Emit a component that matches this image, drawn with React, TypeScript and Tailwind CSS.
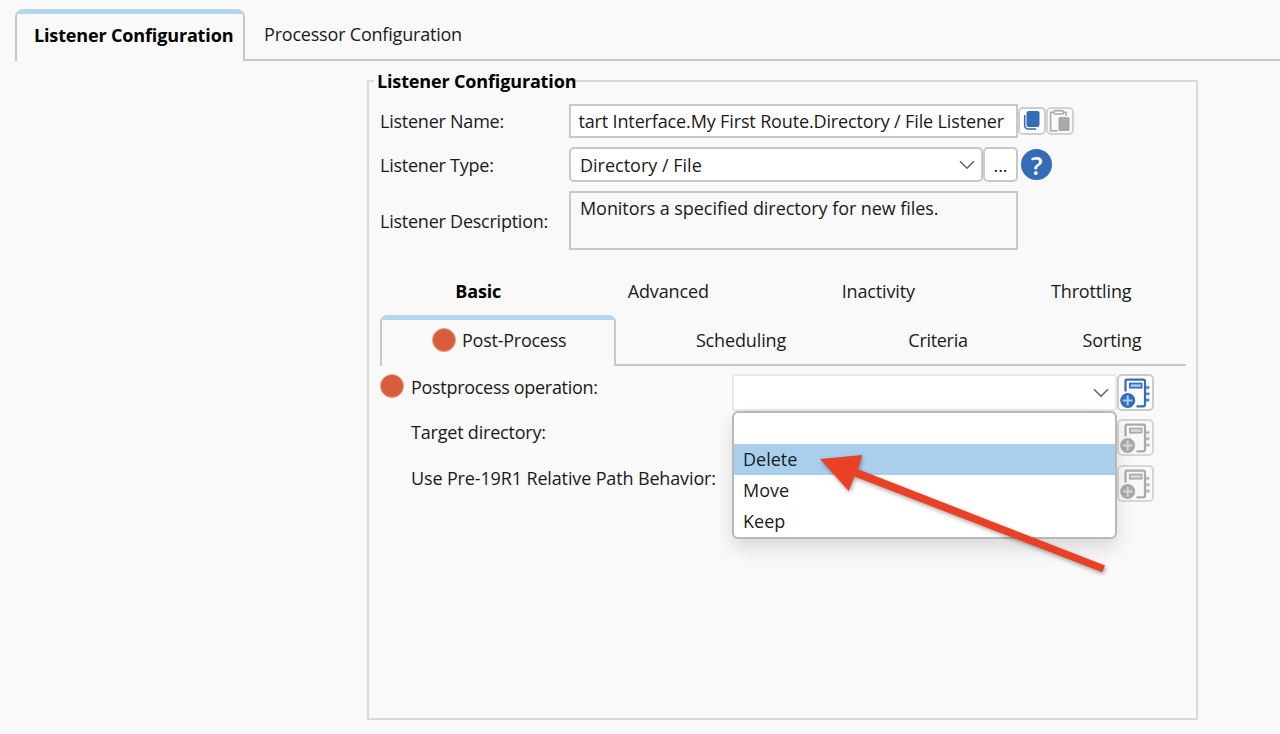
import type { ReactNode } from "react";
import clsx from "clsx";

const OPTIONS = ["", "Delete", "Move", "Keep"];

function Chevron() {
  return (
    <svg width="16" height="10" viewBox="0 0 16 10" fill="none" stroke="#666" strokeWidth="1.6">
      <path d="M1 1.2 8 8.2 15 1.2" />
    </svg>
  );
}

function IconButton({ label, disabled, className, children }: {
  label: string;
  disabled?: boolean;
  className: string;
  children: ReactNode;
}) {
  return (
    <button
      type="button"
      aria-label={label}
      disabled={disabled}
      className={clsx("flex shrink-0 items-center justify-center rounded-[5px] border-2", className)}
    >
      {children}
    </button>
  );
}

function CopyIcon() {
  return (
    <svg width="24" height="24" viewBox="0 0 24 24" fill="none">
      <rect x="6.5" y="2" width="13" height="16" rx="2" fill="#346cb8" />
      <path d="M4.7 6v10.500a3.5 3.5 0 0 0 3.5 3.500h8" stroke="#346cb8" strokeWidth="1.6" />
    </svg>
  );
}

function PasteIcon() {
  return (
    <svg width="24" height="24" viewBox="0 0 24 24" fill="none" stroke="#aaa" strokeWidth="1.6">
      <path d="M5.800 3.200H2.600v18.600h6.900M15.500 3.200h2.500V7" />
      <rect x="5.800" y="1.600" width="9.800" height="3.400" rx="1.700" />
      <rect x="10.500" y="8" width="11" height="14" rx="1.500" fill="#aaa8a8" stroke="none" />
    </svg>
  );
}

function NotebookIcon({ color, soft }: { color: string; soft: string }) {
  return (
    <svg width="32" height="32" viewBox="0 0 32 32" fill="none">
      <path d="M5.500 14.500V4.200a1.500 1.500 0 0 1 1.500-1.500h16.500a1.500 1.500 0 0 1 1.500 1.500v23.600a1.500 1.500 0 0 1-1.500 1.500H16.500" stroke={color} strokeWidth="2.200" />
      <rect x="9.800" y="6.500" width="11.800" height="4.200" fill={soft} stroke={color} strokeWidth="1.700" />
      <path d="M27.800 8.500v4M27.800 14.700v4M27.800 21v4" stroke={soft} strokeWidth="3.600" />
      <path d="M26 10.500h3.200M26 16.700h3.200M26 23h3.200" stroke={color} strokeWidth="1.600" />
      <circle cx="7.700" cy="23.500" r="7.500" fill={color} />
      <path d="M7.700 18.600v9.800M2.800 23.500h9.800" stroke={soft} strokeWidth="2" />
    </svg>
  );
}

function Dot() {
  return <span className="size-[24px] shrink-0 rounded-full border border-[#dfa582] bg-[#d95c3d]" />;
}

function Field({ label, className, children }: { label: string; className: string; children: ReactNode }) {
  return (
    <div className={clsx("flex items-center", className)}>
      <span className="w-[189px] shrink-0 tracking-[-0.24px]">{label}</span>
      {children}
    </div>
  );
}

function Arrow() {
  return (
    <svg
      className="pointer-events-none absolute left-[810px] top-[445px] z-20 drop-shadow-[1px_2px_2px_rgba(0,0,0,0.35)]"
      width="310"
      height="140"
      viewBox="810 445 310 140"
    >
      <path d="M820 459 862.300 455 858 469.300 1105 565.500 1102.300 572.300 854.500 476.500 848.700 491Z" fill="#ea4025" />
    </svg>
  );
}

export default function App() {
  return (
    <div className="relative h-[734px] w-[1280px] overflow-hidden bg-[#f9f9f9] font-['Open_Sans','Noto_Sans',sans-serif] text-[18px] leading-6 tracking-[-0.14px] text-[#1a1a1a]">
      <div className="flex h-[61px] pt-[9px]">
        <div className="w-[15px]" />
        <div className="flex w-[230px] flex-col overflow-hidden rounded-t-[8px] border-x-2 border-[#c8c8c8]">
          <div className="h-[5px] bg-[#b3d6f0]" />
          <div className="whitespace-nowrap pl-[17px] pt-[9px] font-bold tracking-[-0.15px] text-black">Listener Configuration</div>
        </div>
        <div className="flex-1 whitespace-nowrap border-b-2 border-[#c8c8c8] pl-[19px] pt-[13px] tracking-[-0.2px]">Processor Configuration</div>
      </div>

      <fieldset className="ml-[367px] mt-2 h-[651px] w-[831px] border-2 border-[#dadada]">
        <legend className="ml-[5px] h-6 whitespace-nowrap pl-[3px] font-bold tracking-[-0.15px] text-black">Listener Configuration</legend>

        <div className="ml-[11px] w-[806px] pt-[11px]">
          <Field label="Listener Name:" className="h-[34px]">
            <div className="flex h-full w-[449px] items-center justify-end overflow-hidden whitespace-nowrap border-2 border-[#c8c8c8] bg-white pr-[12px]">
              tart Interface.My First Route.Directory / File Listener
            </div>
            <IconButton label="Copy" className="size-7 border-[#cecece] bg-white">
              <CopyIcon />
            </IconButton>
            <IconButton label="Paste" disabled className="size-7 border-[#d3d3d3]">
              <PasteIcon />
            </IconButton>
          </Field>
          <Field label="Listener Type:" className="mt-[9px] h-[35px]">
            <div className="flex h-full w-[414px] items-center justify-between rounded-[5px] border-2 border-[#c8c8c8] bg-white pl-[9px] pr-[6px]">
              <span className="tracking-normal">Directory / File</span>
              <Chevron />
            </div>
            <button type="button" className="h-full w-[35px] rounded-[5px] border-2 border-[#c8c8c8] bg-white">...</button>
            <span className="ml-[3px] flex size-[31px] items-center justify-center rounded-full bg-[#346cb8] text-[26px] font-semibold text-white">?</span>
          </Field>
          <Field label="Listener Description:" className="mt-[9px] h-[59px]">
            <div className="h-full w-[449px] whitespace-nowrap border-2 border-[#c8c8c8] pl-[9px] pt-[3px] tracking-[-0.07px]">
              Monitors a specified directory for new files.
            </div>
          </Field>

          <div className="mt-[29px] flex h-[36px] text-center">
            <div className="w-[197px] font-bold text-black">Basic</div>
            <div className="w-[184px]">Advanced</div>
            <div className="w-[237px]">Inactivity</div>
            <div className="w-[190px]">Throttling</div>
          </div>
          <div className="flex h-[51px] text-center">
            <div className="flex w-[236px] shrink-0 flex-col overflow-hidden rounded-t-[7px] border-x-2 border-[#c8c8c8]">
              <div className="h-[5px] shrink-0 bg-[#b3d6f0]" />
              <div className="flex items-center gap-[6px] pl-[50px] pt-[7px]">
                <Dot />
                <span className="pt-px tracking-[-0.25px]">Post-Process</span>
              </div>
            </div>
            <div className="flex flex-1 border-b-2 border-[#c8c8c8] pt-[13px]">
              <div className="w-[250px]">Scheduling</div>
              <div className="w-[144px] tracking-[-0.3px]">Criteria</div>
              <div className="flex-1 pl-7">Sorting</div>
            </div>
          </div>

          <div className="mt-2 flex">
            <div className="w-[352px] shrink-0 whitespace-nowrap">
              <div className="flex h-6 items-center gap-[7px]">
                <Dot />
                <span className="pt-px tracking-[-0.3px]">Postprocess operation:</span>
              </div>
              <div className="mt-[22px] pl-[31px] tracking-[-0.2px]">Target directory:</div>
              <div className="mt-[22px] pl-[31px]">Use Pre-19R1 Relative Path Behavior:</div>
            </div>
            <div className="relative w-[385px]">
              <div className="flex h-[37px] items-center justify-end rounded-[3px] border-2 border-[#e8e8e8] bg-white pr-[6px]">
                <Chevron />
              </div>
              <ul className="absolute left-0 top-[37px] z-10 w-[385px] rounded-[6px] border-2 border-[#b8b8b8] bg-white tracking-normal shadow-[0_10px_18px_rgba(0,0,0,0.12)]">
                {OPTIONS.map((option) => (
                  <li
                    key={option}
                    className={clsx("h-[31px] pl-[9px] pt-[3px]", option === "Delete" && "bg-[#aacfed]")}
                  >
                    {option}
                  </li>
                ))}
              </ul>
            </div>
            <div className="flex flex-col">
              <IconButton label="Add parameter" className="size-[37px] border-[#cbcbcb] bg-white">
                <NotebookIcon color="#346cb8" soft="#a9cdec" />
              </IconButton>
              <IconButton label="Add target parameter" disabled className="mt-2 size-[37px] border-[#d6d6d6]">
                <NotebookIcon color="#aaa" soft="#dadada" />
              </IconButton>
              <IconButton label="Add path parameter" disabled className="mt-[9px] size-[37px] border-[#d6d6d6]">
                <NotebookIcon color="#aaa" soft="#dadada" />
              </IconButton>
            </div>
          </div>
        </div>
      </fieldset>
      <Arrow />
    </div>
  );
}
